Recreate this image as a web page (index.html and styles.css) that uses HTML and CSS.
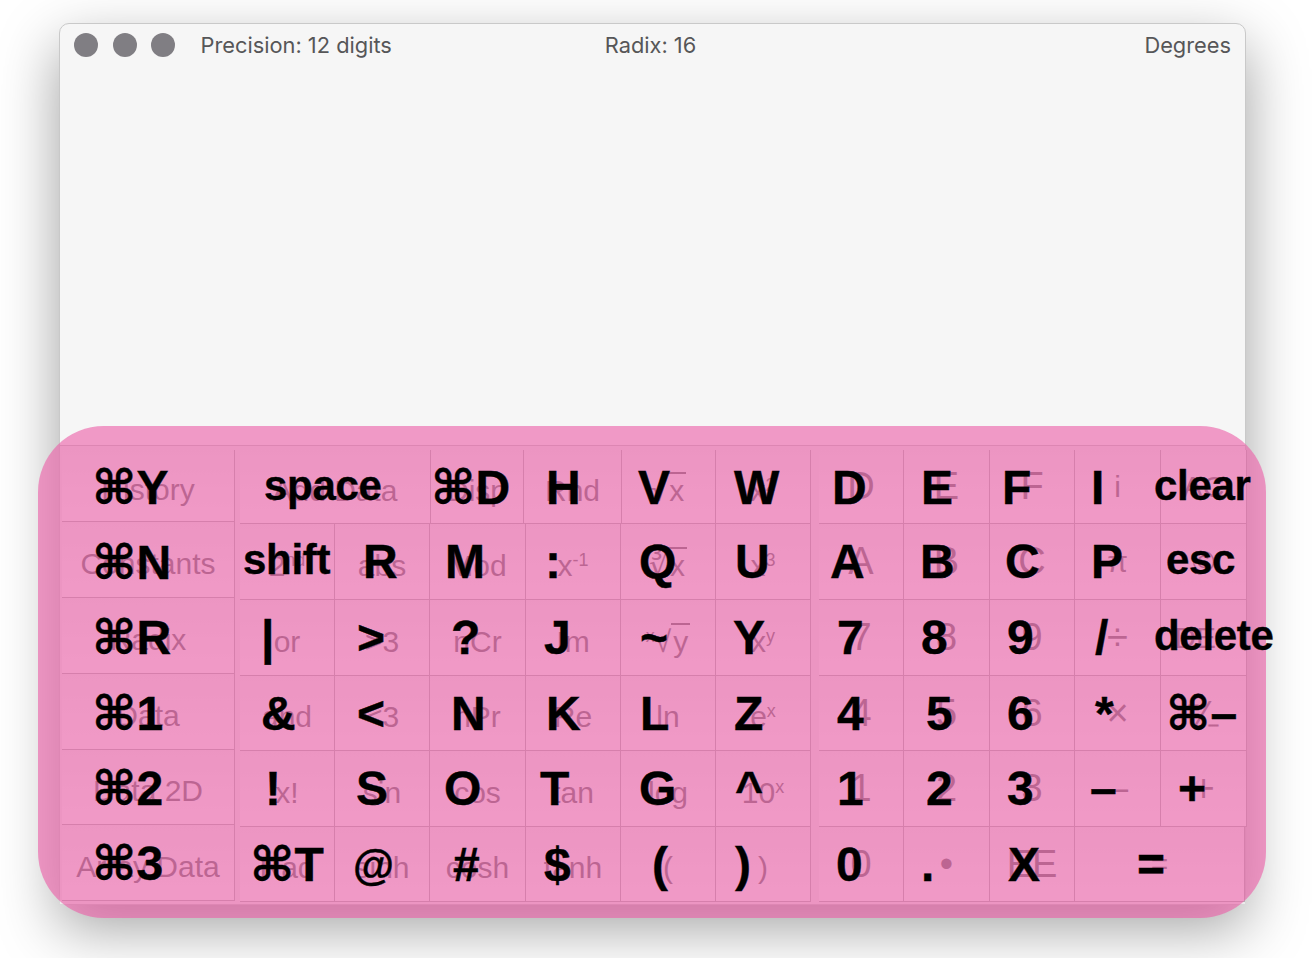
FILE: index.html
```html
<!DOCTYPE html>
<html>
<head>
<meta charset="utf-8">
<title>Calculator keys</title>
<link rel="stylesheet" href="styles.css">
</head>
<body>
<div class="window">
  <div class="titlebar">
    <div class="title-left">
      <span class="light"></span><span class="light"></span><span class="light"></span>
      <span class="precision">Precision: 12 digits</span>
    </div>
    <span class="radix">Radix: 16</span>
    <span class="angle">Degrees</span>
  </div>
  <div class="display"></div>
  <div class="keypad">
    <div class="side">
      <div class="key">History<b class="hint x28">⌘Y</b></div>
      <div class="key">Constants<b class="hint x28">⌘N</b></div>
      <div class="key">Radix<b class="hint x28">⌘R</b></div>
      <div class="key">Data<b class="hint x28">⌘1</b></div>
      <div class="key">Data 2D<b class="hint x28">⌘2</b></div>
      <div class="key">Array Data<b class="hint x28">⌘3</b></div>
    </div>
    <div class="funcs">
      <div class="row row-top">
        <div class="key">Add Data<b class="hint word x22">space</b></div>
        <div class="key">Disp<b class="hint xm2">⌘D</b></div>
        <div class="key">Rnd<b class="hint x20">H</b></div>
        <div class="key"><span class="root">√<i>x</i></span><b class="hint x14">V</b></div>
        <div class="key"><span>x<sup>2</sup></span><b class="hint x16">W</b></div>
      </div>
      <div class="row">
        <div class="key"><span>2<sup>nd</sup></span><b class="hint word x1">shift</b></div>
        <div class="key">abs<b class="hint x26">R</b></div>
        <div class="key">Mod<b class="hint x13">M</b></div>
        <div class="key"><span>x<sup>-1</sup></span><b class="hint x17">:</b></div>
        <div class="key"><span class="root">∛<i>x</i></span><b class="hint x16">Q</b></div>
        <div class="key"><span>x<sup>3</sup></span><b class="hint x17">U</b></div>
      </div>
      <div class="row">
        <div class="key">or<b class="hint x19">|</b></div>
        <div class="key">&gt;3<b class="hint x20">&gt;</b></div>
        <div class="key">nCr<b class="hint x19">?</b></div>
        <div class="key">Im<b class="hint x16">J</b></div>
        <div class="key"><span class="root"><sup>x</sup>√<i>y</i></span><b class="hint x17">~</b></div>
        <div class="key"><span>x<sup>y</sup></span><b class="hint x15">Y</b></div>
      </div>
      <div class="row">
        <div class="key">and<b class="hint x19">&amp;</b></div>
        <div class="key">&lt;3<b class="hint x20">&lt;</b></div>
        <div class="key">nPr<b class="hint x19">N</b></div>
        <div class="key">Re<b class="hint x18">K</b></div>
        <div class="key">ln<b class="hint x17">L</b></div>
        <div class="key"><span>e<sup>x</sup></span><b class="hint x16">Z</b></div>
      </div>
      <div class="row">
        <div class="key">x!<b class="hint x23">!</b></div>
        <div class="key">sin<b class="hint x19">S</b></div>
        <div class="key">cos<b class="hint x12">O</b></div>
        <div class="key">tan<b class="hint x12">T</b></div>
        <div class="key">log<b class="hint x16">G</b></div>
        <div class="key"><span>10<sup>x</sup></span><b class="hint x17">^</b></div>
      </div>
      <div class="row">
        <div class="key">Rad<b class="hint x8">⌘T</b></div>
        <div class="key">sinh<b class="hint at x16">@</b></div>
        <div class="key">cosh<b class="hint x21">#</b></div>
        <div class="key">tanh<b class="hint x16">$</b></div>
        <div class="key">(<b class="hint x29">(</b></div>
        <div class="key">)<b class="hint x17">)</b></div>
      </div>
    </div>
    <div class="numbers">
      <div class="row">
        <div class="key">D<b class="hint x11">D</b></div>
        <div class="key">E<b class="hint x15">E</b></div>
        <div class="key">F<b class="hint x10">F</b></div>
        <div class="key small">i<b class="hint x14">I</b></div>
        <div class="key small">AC<b class="hint word xm9">clear</b></div>
      </div>
      <div class="row">
        <div class="key">A<b class="hint x9">A</b></div>
        <div class="key">B<b class="hint x14">B</b></div>
        <div class="key">C<b class="hint x13">C</b></div>
        <div class="key small">π<b class="hint x14">P</b></div>
        <div class="key small">©<b class="hint word x3">esc</b></div>
      </div>
      <div class="row">
        <div class="key">7<b class="hint x16">7</b></div>
        <div class="key">8<b class="hint x15">8</b></div>
        <div class="key">9<b class="hint x15">9</b></div>
        <div class="key">÷<b class="hint x18">/</b></div>
        <div class="key small">DEL<b class="hint word xm9">delete</b></div>
      </div>
      <div class="row">
        <div class="key">4<b class="hint x16">4</b></div>
        <div class="key">5<b class="hint x20">5</b></div>
        <div class="key">6<b class="hint x15">6</b></div>
        <div class="key">×<b class="hint x18">*</b></div>
        <div class="key">⁺⁄₋<b class="hint x3">⌘–</b></div>
      </div>
      <div class="row">
        <div class="key">1<b class="hint x16">1</b></div>
        <div class="key">2<b class="hint x20">2</b></div>
        <div class="key">3<b class="hint x15">3</b></div>
        <div class="key">–<b class="hint x13">–</b></div>
        <div class="key">+<b class="hint x15">+</b></div>
      </div>
      <div class="row row-last">
        <div class="key">0<b class="hint x15">0</b></div>
        <div class="key">•<b class="hint x15">.</b></div>
        <div class="key">EE<b class="hint x16">X</b></div>
        <div class="key small">=<b class="hint x60">=</b></div>
      </div>
    </div>
  </div>
</div>
<div class="overlay"></div>
</body>
</html>
```

FILE: styles.css
```css
html { overflow: hidden; }
body { margin: 0; height: 958px; position: relative; background: #fff; overflow: hidden; }

.window {
  position: absolute;
  left: 59px;
  top: 23px;
  width: 1185px;
  height: 880px;
  display: flex;
  flex-direction: column;
  background: #f6f6f6;
  border: 1px solid #c9c9c9;
  border-radius: 10px;
  box-shadow: 0 22px 60px rgba(0,0,0,.38);
}

.titlebar {
  height: 41px;
  padding: 0 14px;
  display: grid;
  grid-template-columns: 1fr auto 1fr;
  align-items: center;
  font: 21.8px "Inter", "Liberation Sans", sans-serif;
  color: #565658;
}
.title-left { display: flex; align-items: center; gap: 14.5px; }
.light { width: 24px; height: 24px; border-radius: 50%; background: #807e83; }
.precision { margin-left: 11px; }
.radix { margin-right: 4px; }
.angle { text-align: right; }

.display { flex: 1; }

.keypad {
  height: 454px;
  padding: 4px 0 0 2px;
  display: flex;
  background: #ececec;
  border-top: 1px solid #c4c4c4;
  font: 30px "Liberation Sans", sans-serif;
  color: #707070;
}
.side { flex: none; width: 173px; margin-right: 5px; display: flex; flex-direction: column; }
.funcs { flex: none; width: 571px; margin-right: 8px; }
.numbers { flex: none; width: 428px; font-size: 38px; }

.row { display: grid; grid-template-columns: 95px 95px 96px 95px 95px 95px; height: 76px; }
.row:nth-child(1) { height: 74px; }
.row:nth-child(4), .row:nth-child(6) { height: 75px; }
.row-top { grid-template-columns: 191px 93px 98px 94px 95px; }
.numbers .row { grid-template-columns: 85px 86px 85px 86px 86px; }
.numbers .row-last { grid-template-columns: 85px 86px 85px 170px; }

.key {
  position: relative;
  display: flex;
  align-items: center;
  justify-content: center;
  box-sizing: border-box;
  padding-top: 8px;
  background: linear-gradient(#ededed, #f8f8f8);
  border-right: 1px solid #b4b4b4;
  border-bottom: 1px solid #b4b4b4;
  white-space: nowrap;
}
.numbers .key { padding-top: 0; }
.numbers .small { font-size: 30px; }

.side .key { height: 76px; }
.side .key:nth-child(1) { height: 72px; }
.side .key:nth-child(5) { height: 75px; }

sup { font-size: .6em; line-height: 0; vertical-align: .55em; }
.root i { font-style: normal; border-top: 2px solid #707070; padding: 0 2px; }

.hint {
  position: absolute;
  top: 14px;
  margin-left: 2px;
  z-index: 2;
  font: bold 48px/1 "Liberation Sans", "DejaVu Sans", sans-serif;
  color: #000;
  -webkit-text-stroke: .4px #000;
}
.word { font-size: 42px; letter-spacing: -.3px; top: 15px; }
.at { font-size: 42px; top: 18px; }
.side .key:nth-child(2) .hint { top: 17px; }
.side .key:nth-child(3) .hint,
.side .key:nth-child(4) .hint { top: 16px; }
.side .key:nth-child(5) .hint,
.side .key:nth-child(6) .hint { top: 15px; }

.xm9 { left: -9px; } .xm2 { left: -2px; }
.x1 { left: 1px; } .x3 { left: 3px; } .x8 { left: 8px; } .x9 { left: 9px; }
.x10 { left: 10px; } .x11 { left: 11px; } .x12 { left: 12px; } .x13 { left: 13px; } .x14 { left: 14px; }
.x15 { left: 15px; } .x16 { left: 16px; } .x17 { left: 17px; } .x18 { left: 18px; } .x19 { left: 19px; }
.x20 { left: 20px; } .x21 { left: 21px; } .x22 { left: 22px; } .x23 { left: 23px; }
.x26 { left: 26px; } .x28 { left: 28px; } .x29 { left: 29px; } .x60 { left: 60px; }

.overlay {
  position: absolute;
  left: 38px;
  top: 426px;
  width: 1228px;
  height: 492px;
  border-radius: 66px;
  background: rgba(235,96,168,.62);
  z-index: 1;
}
```
